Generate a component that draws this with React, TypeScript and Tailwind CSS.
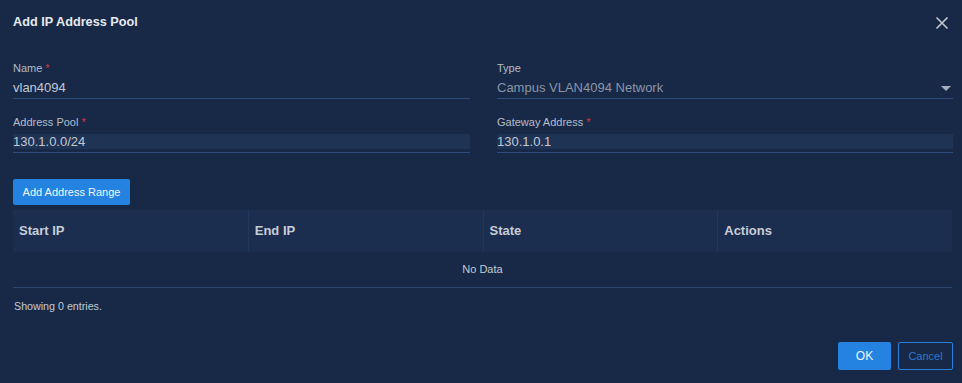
import React from 'react';

interface FieldProps {
  label: string;
  value: string;
  required?: boolean;
  filled?: boolean;
  select?: boolean;
}

const Field: React.FC<FieldProps> = ({ label, value, required, filled, select }) => (
  <div className="flex flex-col">
    <div className="h-[14px] text-[11px] leading-[14px] text-[#b6bdc9]">
      {label}
      {required && <span className="ml-[3px] text-[#d8363f]">*</span>}
    </div>
    <div className="h-[24px] border-b border-[#2e4c7b]">
      <div
        className={`mt-[5px] flex h-[15px] items-center justify-between text-[13px] leading-[14px] ${
          filled ? 'bg-[#1f3455]' : ''
        } ${select ? 'text-[#8a95a7]' : 'text-[#c3c9d3]'}`}
      >
        <span>{value}</span>
        {select && (
          <svg width="10" height="5" viewBox="0 0 10 5" className="mr-[2px] mt-[1px]">
            <path d="M0 0h10L5 5z" fill="#a3adbd" />
          </svg>
        )}
      </div>
    </div>
  </div>
);

const columns = ['Start IP', 'End IP', 'State', 'Actions'];

export default function App() {
  return (
    <div
      className="h-[383px] w-[962px] overflow-hidden bg-[#172947] pl-[13px] pr-[9px] text-[#c3c9d3]"
      style={{ fontFamily: '"Liberation Sans", Arial, sans-serif' }}
    >
      <div className="flex h-[46px] items-center justify-between">
        <h2 className="text-[12.7px] font-bold text-[#e6e9ee]">Add IP Address Pool</h2>
        <svg width="14" height="14" viewBox="0 0 14 14" className="mr-[4px]">
          <path d="M1.5 1.5l11 11M12.5 1.5l-11 11" stroke="#c3c9d3" strokeWidth="1.6" />
        </svg>
      </div>

      <div className="mt-[15px] grid grid-cols-[457px_456px] gap-x-[27px] gap-y-[16px]">
        <Field label="Name" value="vlan4094" required />
        <Field label="Type" value="Campus VLAN4094 Network" select />
        <Field label="Address Pool" value="130.1.0.0/24" required filled />
        <Field label="Gateway Address" value="130.1.0.1" required filled />
      </div>

      <button className="mt-[26px] h-[26px] w-[117px] rounded-[2px] bg-[#2482e0] text-[11px] text-[#f2f6fb]">
        Add Address Range
      </button>

      <div className="mt-[5px] w-[939px]">
        <div className="grid h-[42px] grid-cols-4 bg-[#1c2e50]">
          {columns.map((c, i) => (
            <div
              key={c}
              className={`flex items-center pl-[6px] text-[13px] font-bold text-[#c7cdd7] ${
                i > 0 ? 'border-l border-[#22375b]' : ''
              }`}
            >
              {c}
            </div>
          ))}
        </div>
        <div className="flex h-[36px] items-center justify-center border-b border-[#2a4570] text-[11px] text-[#c3c9d3]">
          No Data
        </div>
      </div>

      <div className="mt-[12px] pl-[1px] text-[10.7px] leading-[12px] text-[#c3c9d3]">Showing 0 entries.</div>

      <div className="mt-[30px] flex w-[940px] justify-end gap-[7px]">
        <button className="h-[28px] w-[53px] rounded-[2px] bg-[#2482e0] text-[12px] text-[#f2f6fb]">OK</button>
        <button className="h-[28px] w-[55px] rounded-[2px] border border-[#2a80dc] text-[11px] text-[#2c79cb]">
          Cancel
        </button>
      </div>
    </div>
  );
}
